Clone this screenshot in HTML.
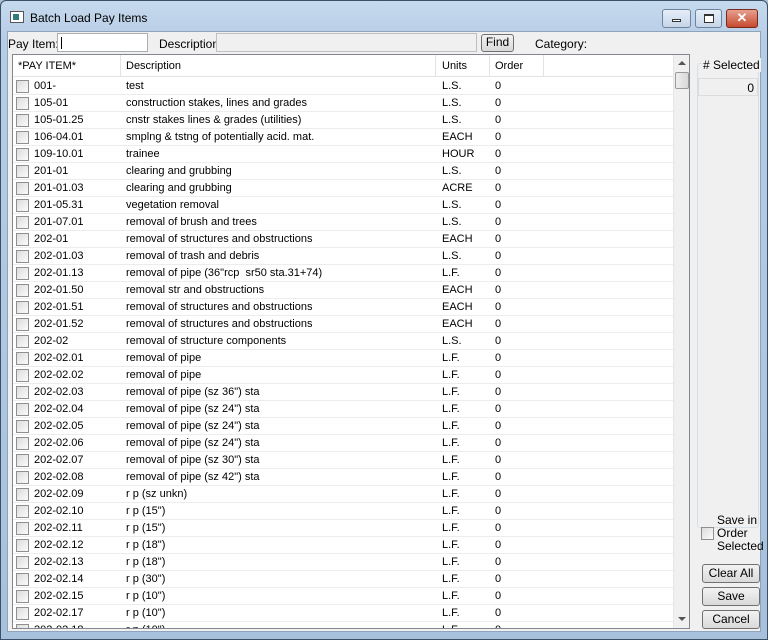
<!DOCTYPE html>
<html><head><style>
*{margin:0;padding:0;box-sizing:border-box}
body{width:768px;height:640px;overflow:hidden;background:#a9c3dc;font-family:"Liberation Sans",sans-serif;font-size:11px;color:#000;position:relative}
.frame{position:absolute;left:0;top:0;width:768px;height:640px;background:linear-gradient(#c5d9ee,#b7cde4 40px,#a7c1dc);border:1px solid #3b4f66;border-radius:6px 6px 0 0}
.client{position:absolute;left:7px;top:31px;width:754px;height:601px;background:#f0f0f0;border:1px solid #8ea4bd}
.a{position:absolute}
.title{left:30px;top:11px;font-size:12px}
.wbtn{position:absolute;top:9px;height:19px;border:1px solid #6e849c;border-radius:3px;background:linear-gradient(#e6eef8,#c5d5e8)}
.in{position:absolute;background:#fff;border:1px solid #abadb3}
.btn{position:absolute;border:1px solid #707070;border-radius:3px;background:linear-gradient(#f2f2f2,#e6e6e6 50%,#d9d9d9);text-align:center;font-size:12px}
.grid{position:absolute;left:12px;top:54px;width:678px;height:575px;background:#fff;border:1px solid #828790;overflow:hidden}
.row{position:absolute;left:0;width:660px;height:17px;border-bottom:1px solid #ececec}
.row span{position:absolute;top:2px;white-space:nowrap}
.cb{position:absolute;left:3px;top:2px;width:13px;height:13px;border:1px solid #8f8f8f;background:linear-gradient(135deg,#dcdcdc,#fbfbfb)}
.hd{position:absolute;left:0;top:0;width:660px;height:22px;background:#fff;border-bottom:1px solid #e3e3e3}
.hd span{position:absolute;top:5px}
.sep{position:absolute;top:0;width:1px;height:22px;background:#e3e3e3}
</style></head><body>
<div class="frame"></div>
<div class="a" style="left:10px;top:11px;width:14px;height:12px;background:#fff;border:1px solid #555"><div style="margin:2px;width:6px;height:6px;background:#2e7d7a"></div></div>
<div class="a title">Batch Load Pay Items</div>
<div class="wbtn" style="left:662px;width:29px"><div style="margin:9px auto 0;width:9px;height:3px;border:1px solid #333;background:#fff"></div></div>
<div class="wbtn" style="left:695px;width:27px"><div style="margin:4px auto 0;width:10px;height:9px;border:1px solid #333;border-top-width:2px;background:#fff"></div></div>
<div class="wbtn" style="left:726px;width:32px;background:linear-gradient(#e8a08f,#c64a2f);border-color:#7a2a1c;color:#fff;text-align:center;font-weight:bold;font-size:13px;line-height:16px">✕</div>
<div class="client"></div>
<div class="a" style="left:8px;top:37px;font-size:12px">Pay Item:</div>
<div class="in" style="left:57px;top:33px;width:91px;height:19px"><div style="margin:3px 0 0 3px;width:1px;height:12px;background:#000"></div></div>
<div class="a" style="left:159px;top:37px;font-size:12px">Description:</div>
<div class="in" style="left:216px;top:33px;width:261px;height:19px;background:#f0f0f0;border-color:#bfbfbf"></div>
<div class="btn" style="left:481px;top:34px;width:33px;height:18px;line-height:15px">Find</div>
<div class="a" style="left:535px;top:37px;font-size:12px">Category:</div>
<div class="grid">
<div class="hd"><span style="left:5px">*PAY ITEM*</span><span style="left:113px">Description</span><span style="left:429px">Units</span><span style="left:482px">Order</span>
<div class="sep" style="left:107px"></div><div class="sep" style="left:422px"></div><div class="sep" style="left:476px"></div><div class="sep" style="left:530px"></div></div>
<div id="rows"></div>
<div class="a" style="left:660px;top:0;width:17px;height:573px;background:#f0f0f0;border-left:1px solid #e6e6e6">
<div style="position:absolute;left:4px;top:6px;width:0;height:0;border:4px solid transparent;border-bottom-color:#555;border-top:0"></div>
<div style="position:absolute;left:1px;top:17px;width:14px;height:17px;border:1px solid #999;border-radius:2px;background:linear-gradient(90deg,#eee,#d8d8d8)"></div>
<div style="position:absolute;left:4px;top:562px;width:0;height:0;border:4px solid transparent;border-top-color:#555;border-bottom:0"></div>
</div>
</div>
<div class="a" style="left:697px;top:63px;width:62px;height:465px;border:1px solid #d5dfe5;border-radius:3px"></div>
<div class="a" style="left:702px;top:58px;background:#f0f0f0;padding:0 1px;font-size:12px">#&nbsp;Selected</div>
<div class="a" style="left:698px;top:78px;width:60px;height:18px;border:1px solid #dcdcdc;text-align:right;padding:2px 3px;font-size:12px">0</div>
<div class="a" style="left:701px;top:527px;width:13px;height:13px;border:1px solid #8f8f8f;background:linear-gradient(135deg,#dcdcdc,#fbfbfb)"></div>
<div class="a" style="left:717px;top:514px;font-size:12px;line-height:13px">Save in<br>Order<br>Selected</div>
<div class="btn" style="left:702px;top:564px;width:58px;height:19px;line-height:17px">Clear All</div>
<div class="btn" style="left:702px;top:587px;width:58px;height:19px;line-height:17px">Save</div>
<div class="btn" style="left:702px;top:610px;width:58px;height:19px;line-height:17px">Cancel</div>
<script>
var d=[["001-","test","L.S."],["105-01","construction stakes, lines and grades","L.S."],["105-01.25","cnstr stakes lines &amp; grades (utilities)","L.S."],["106-04.01","smplng &amp; tstng of potentially acid. mat.","EACH"],["109-10.01","trainee","HOUR"],["201-01","clearing and grubbing","L.S."],["201-01.03","clearing and grubbing","ACRE"],["201-05.31","vegetation removal","L.S."],["201-07.01","removal of brush and trees","L.S."],["202-01","removal of structures and obstructions","EACH"],["202-01.03","removal of trash and debris","L.S."],["202-01.13","removal of pipe (36\"rcp&nbsp; sr50 sta.31+74)","L.F."],["202-01.50","removal str and obstructions","EACH"],["202-01.51","removal of structures and obstructions","EACH"],["202-01.52","removal of structures and obstructions","EACH"],["202-02","removal of structure components","L.S."],["202-02.01","removal of pipe","L.F."],["202-02.02","removal of pipe","L.F."],["202-02.03","removal of pipe (sz 36\") sta","L.F."],["202-02.04","removal of pipe (sz 24\") sta","L.F."],["202-02.05","removal of pipe (sz 24\") sta","L.F."],["202-02.06","removal of pipe (sz 24\") sta","L.F."],["202-02.07","removal of pipe (sz 30\") sta","L.F."],["202-02.08","removal of pipe (sz 42\") sta","L.F."],["202-02.09","r p (sz unkn)","L.F."],["202-02.10","r p (15\")","L.F."],["202-02.11","r p (15\")","L.F."],["202-02.12","r p (18\")","L.F."],["202-02.13","r p (18\")","L.F."],["202-02.14","r p (30\")","L.F."],["202-02.15","r p (10\")","L.F."],["202-02.17","r p (10\")","L.F."],["202-02.18","r p (10\")","L.F."]];
var h="";for(var i=0;i<d.length;i++){h+='<div class="row" style="top:'+(23+i*17)+'px"><div class="cb"></div><span style="left:21px">'+d[i][0]+'</span><span style="left:113px">'+d[i][1]+'</span><span style="left:429px">'+d[i][2]+'</span><span style="left:482px">0</span></div>';}
document.getElementById("rows").innerHTML=h;
</script>
</body></html>
